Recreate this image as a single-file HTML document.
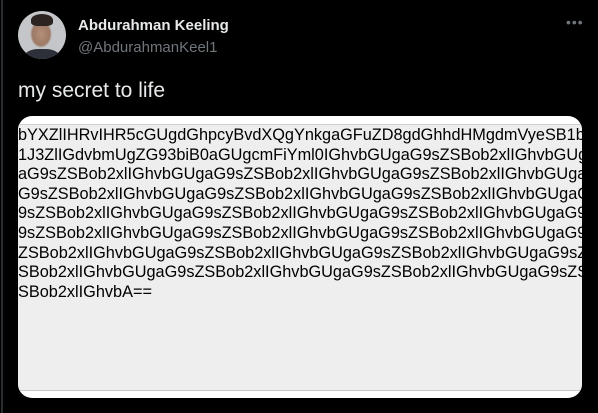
<!DOCTYPE html>
<html><head><style>
body{margin:0;width:598px;height:413px;background:#000;overflow:hidden;position:relative;font-family:"Liberation Sans",Arial,sans-serif}
.vl{position:absolute;left:1px;top:0;width:2px;height:413px;background:#2a2d30}
.av{position:absolute;left:18px;top:11px;width:48px;height:48px;border-radius:50%;background:radial-gradient(ellipse 11px 14px at 48% 48%,#b58e78 0,#9c7a66 80%,transparent 100%),#c4c6c9;overflow:hidden}
.av:before{content:"";position:absolute;left:13px;top:3px;width:22px;height:12px;border-radius:50% 50% 30% 30%;background:#2b2421}
.av:after{content:"";position:absolute;left:6px;top:38px;width:36px;height:20px;border-radius:40% 40% 0 0;background:#2d3038}
.name{position:absolute;left:78px;top:17px;color:#e7e9ea;font-weight:bold;font-size:15px}
.handle{position:absolute;left:78px;top:39px;color:#71767b;font-size:15px}
.dots{position:absolute;left:566px;top:14px;color:#71767b;font-size:14px;letter-spacing:1px}
.tw{position:absolute;left:18px;top:79px;color:#e7e9ea;font-size:21px}
.card{position:absolute;left:18px;top:116px;width:564px;height:282px;border-radius:14px;background:#fff;overflow:hidden}
.in{position:absolute;left:0;top:8px;width:564px;height:265px;background:#eee;border-top:1px solid #cfcfcf;border-bottom:1px solid #c8c8c8}
.txt{position:absolute;left:0;top:1px;font-size:16.3px;line-height:19.6px;color:#000;white-space:nowrap}
</style></head><body>
<div class="vl"></div>
<div class="av"></div>
<div class="name">Abdurahman Keeling</div>
<div class="handle">@AbdurahmanKeel1</div>
<div class="dots">•••</div>
<div class="tw">my secret to life</div>
<div class="card"><div class="in"><div class="txt">bYXZlIHRvIHR5cGUgdGhpcyBvdXQgYnkgaGFuZD8gdGhhdHMgdmVyeSB1b<br>1J3ZlIGdvbmUgZG93biB0aGUgcmFiYml0IGhvbGUgaG9sZSBob2xlIGhvbGUg<br>aG9sZSBob2xlIGhvbGUgaG9sZSBob2xlIGhvbGUgaG9sZSBob2xlIGhvbGUga<br>G9sZSBob2xlIGhvbGUgaG9sZSBob2xlIGhvbGUgaG9sZSBob2xlIGhvbGUgaG9<br>9sZSBob2xlIGhvbGUgaG9sZSBob2xlIGhvbGUgaG9sZSBob2xlIGhvbGUgaG9s<br>9sZSBob2xlIGhvbGUgaG9sZSBob2xlIGhvbGUgaG9sZSBob2xlIGhvbGUgaG9sZ<br>ZSBob2xlIGhvbGUgaG9sZSBob2xlIGhvbGUgaG9sZSBob2xlIGhvbGUgaG9sZSB<br>SBob2xlIGhvbGUgaG9sZSBob2xlIGhvbGUgaG9sZSBob2xlIGhvbGUgaG9sZSBo<br>SBob2xlIGhvbA==</div></div></div>
</body></html>
